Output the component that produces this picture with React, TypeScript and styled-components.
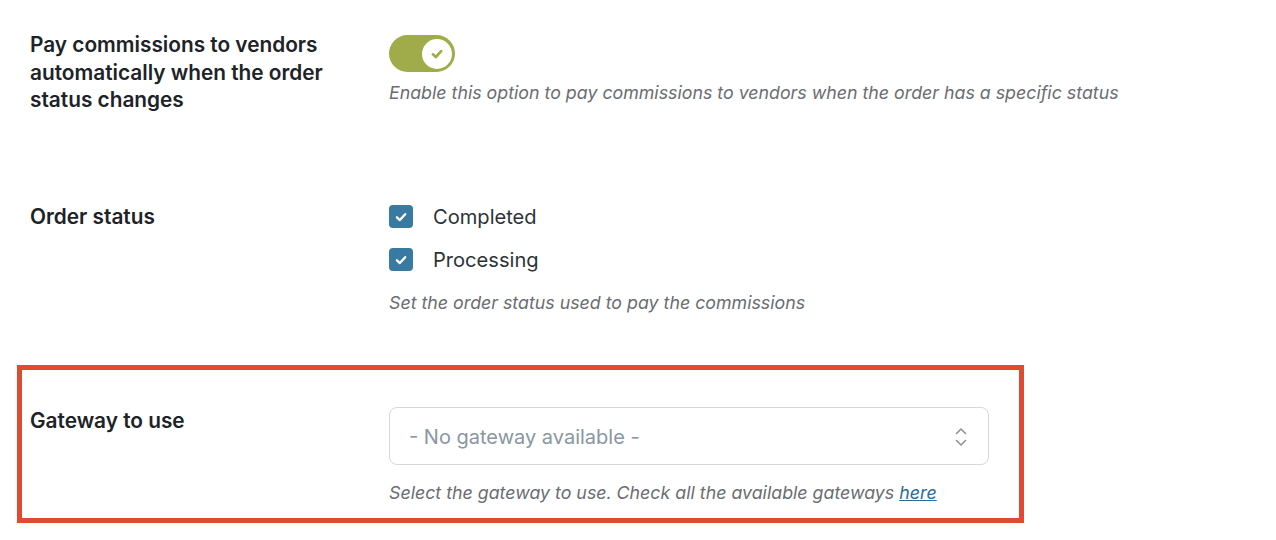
import React from "react";
import styled, { createGlobalStyle } from "styled-components";

const GlobalStyle = createGlobalStyle`
  html, body {
    margin: 0;
    padding: 0;
    background: #ffffff;
  }
  body {
    font-family: Inter, "Noto Sans", "Liberation Sans", sans-serif;
    color: #1d2327;
  }
`;

const Page = styled.div`
  width: 1276px;
  height: 540px;
  box-sizing: border-box;
  padding: 31px 0 0 17px;
  overflow: hidden;
`;

const Row = styled.div<{ $top?: number }>`
  display: grid;
  grid-template-columns: 359px 1fr;
  align-items: start;
  padding-left: 13px;
  margin-top: ${(p) => p.$top || 0}px;
`;

const Highlight = styled.div`
  width: 1007px;
  box-sizing: border-box;
  margin-top: 50px;
  border: 5px solid #df4a31;
  padding: 37px 0 13px 8px;
  display: grid;
  grid-template-columns: 359px 1fr;
  align-items: start;
`;

const Label = styled.div`
  font-size: 20.8px;
  line-height: 27.5px;
  font-weight: 600;
  color: #1d2327;
  width: 330px;
`;

const Field = styled.div`
  display: flex;
  flex-direction: column;
  align-items: flex-start;
`;

const Description = styled.p<{ $top: number }>`
  margin: ${(p) => p.$top}px 0 0;
  font-size: 17.8px;
  line-height: 24px;
  font-style: italic;
  color: #6a6d72;
  white-space: nowrap;
`;

const Link = styled.a`
  color: #2a6c99;
  text-decoration: underline;
`;

const Toggle = styled.div`
  margin-top: 4px;
  width: 66px;
  height: 37px;
  border-radius: 19px;
  background: #a0ab49;
  display: flex;
  align-items: center;
  justify-content: flex-end;
  padding-right: 3px;
  box-sizing: border-box;
`;

const Knob = styled.div`
  width: 30px;
  height: 30px;
  border-radius: 50%;
  background: #ffffff;
  display: flex;
  align-items: center;
  justify-content: center;
`;

const Options = styled.div`
  display: flex;
  flex-direction: column;
  gap: 15px;
`;

const Option = styled.label`
  display: flex;
  align-items: center;
  gap: 20px;
  font-size: 20.1px;
  line-height: 28px;
  color: #2c3338;
`;

const Box = styled.span`
  width: 24px;
  height: 23px;
  border-radius: 4px;
  background: #387aa1;
  display: flex;
  align-items: center;
  justify-content: center;
`;

const Select = styled.div`
  width: 600px;
  height: 58px;
  box-sizing: border-box;
  border: 1px solid #d6d8dc;
  border-radius: 8px;
  display: flex;
  align-items: center;
  justify-content: space-between;
  padding: 2px 21px 0 19px;
  font-size: 20px;
  color: #8a96a2;
  background: #ffffff;
`;

const Check = ({ color, size, weight }: { color: string; size: number; weight: number }) => (
  <svg width={size} height={size} viewBox="0 0 12 12" fill="none">
    <path
      d="M2.5 6.3 L5 8.6 L9.6 3.6"
      stroke={color}
      strokeWidth={weight}
      strokeLinecap="round"
      strokeLinejoin="round"
    />
  </svg>
);

const Chevrons = () => (
  <svg width="12" height="20" viewBox="0 0 12 20" fill="none">
    <path
      d="M1.5 6.5 L6 2 L10.5 6.5 M1.5 13.5 L6 18 L10.5 13.5"
      stroke="#8e9399"
      strokeWidth={1.6}
      strokeLinecap="round"
      strokeLinejoin="round"
    />
  </svg>
);

export default function App() {
  return (
    <>
      <GlobalStyle />
      <Page>
        <Row>
          <Label>Pay commissions to vendors automatically when the order status changes</Label>
          <Field>
            <Toggle>
              <Knob>
                <Check color="#a0ab49" size={14} weight={2.3} />
              </Knob>
            </Toggle>
            <Description $top={9}>
              Enable this option to pay commissions to vendors when the order has a specific status
            </Description>
          </Field>
        </Row>
        <Row $top={89}>
          <Label>Order status</Label>
          <Field>
            <Options>
              <Option>
                <Box>
                  <Check color="#ffffff" size={14} weight={2} />
                </Box>
                Completed
              </Option>
              <Option>
                <Box>
                  <Check color="#ffffff" size={14} weight={2} />
                </Box>
                Processing
              </Option>
            </Options>
            <Description $top={17}>Set the order status used to pay the commissions</Description>
          </Field>
        </Row>
        <Highlight>
          <Label>Gateway to use</Label>
          <Field>
            <Select>
              <span>- No gateway available -</span>
              <Chevrons />
            </Select>
            <Description $top={16}>
              Select the gateway to use. Check all the available gateways <Link href="#">here</Link>
            </Description>
          </Field>
        </Highlight>
      </Page>
    </>
  );
}
